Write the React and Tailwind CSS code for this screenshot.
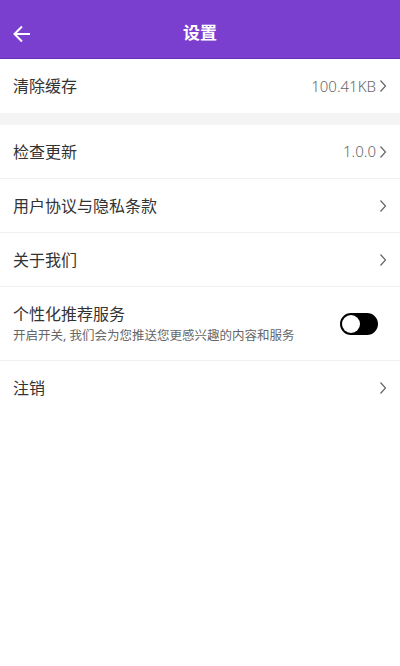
import React, { useState } from 'react';

const Chevron = () => (
  <svg className="w-[10px] h-[14px] text-[#666]" viewBox="0 0 10 14" fill="none" stroke="currentColor" strokeWidth="1.2">
    <path d="M2.5 1.5l5 5.5-5 5.5" />
  </svg>
);

const Row = ({ title, value, last }) => (
  <div className={`flex items-center justify-between h-[54px] pl-[13px] pr-[12px] ${last ? '' : 'border-b border-[#f0f0f0]'}`}>
    <span className="text-[16px] text-[#333]">{title}</span>
    <div className="flex items-center gap-[2px]">
      {value && <span className="text-[15px] text-[#666] font-light">{value}</span>}
      <Chevron />
    </div>
  </div>
);

export default function App() {
  const [on, setOn] = useState(false);

  return (
    <div
      className="w-[400px] h-[666px] bg-white flex flex-col"
      style={{ fontFamily: '"Noto Sans", "Noto Sans CJK SC", sans-serif' }}
    >
      {/* Header */}
      <div className="h-[59px] pt-[7px] bg-[#7b3fd0] border-b border-[#6a30bd] flex items-center relative">
        <svg className="absolute left-[12px] top-[24px] w-[20px] h-[20px] text-white" viewBox="0 0 20 20" fill="none" stroke="currentColor" strokeWidth="2">
          <path d="M18 10H3M10 2.5L2.5 10l7.5 7.5" />
        </svg>
        <span className="flex-1 text-center text-white text-[17px] font-bold">设置</span>
      </div>

      <Row title="清除缓存" value="100.41KB" last />
      <div className="h-[12px] bg-[#f4f4f4]" />
      <Row title="检查更新" value="1.0.0" />
      <Row title="用户协议与隐私条款" />
      <Row title="关于我们" />

      <div className="flex items-center justify-between h-[74px] px-[13px] border-b border-[#f0f0f0]">
        <div className="flex flex-col">
          <span className="text-[16px] text-[#333] leading-[22px]">个性化推荐服务</span>
          <span className="text-[12.5px] text-[#666] leading-[18px] mt-[2px]">开启开关, 我们会为您推送您更感兴趣的内容和服务</span>
        </div>
        <button
          onClick={() => setOn(!on)}
          className={`w-[38px] h-[22px] rounded-full bg-black border-2 border-black flex items-center mr-[9px] ${on ? 'justify-end' : 'justify-start'}`}
        >
          <span className="w-[18px] h-[18px] rounded-full bg-white" />
        </button>
      </div>

      <Row title="注销" last />
    </div>
  );
}
